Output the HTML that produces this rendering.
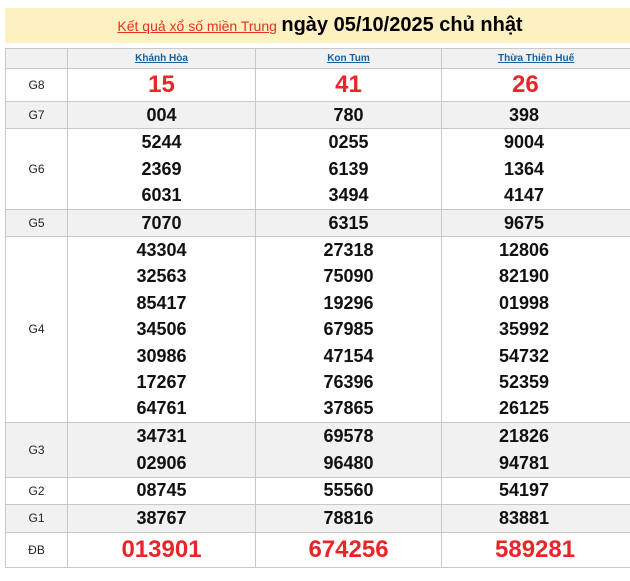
<!DOCTYPE html>
<html><head><meta charset="utf-8"><style>
body{margin:0;background:#fff;font-family:"Liberation Sans",Arial,sans-serif;width:630px;height:581px;overflow:hidden;position:relative}
.hd{position:absolute;left:5px;top:8px;width:640px;height:35px;background:#fdf1c2;text-align:center;line-height:35px;padding-right:10px;box-sizing:border-box}
.hd a{color:#e8301c;font-size:14px;text-decoration:underline}
.hd b{font-size:20px;color:#000}
table{position:absolute;left:5px;top:48px;border-collapse:collapse;table-layout:fixed;width:640px}
td{border:1px solid #c8c8c8;text-align:center;padding:0;font-weight:bold;font-size:18px;color:#111}
td.l{font-weight:normal;font-size:12px;color:#222;width:61px}
tr.g td{background:#f1f1f1}
.h td{height:19px;font-size:10px;font-weight:bold}
.h a{color:#1a5e96;text-decoration:underline}
.r{color:#e8262a;font-size:24px}
.n div{height:26.4px;line-height:26.4px}
</style></head><body>
<div class="hd"><a>Kết quả xổ số miền Trung</a> <b>ngày 05/10/2025 chủ nhật</b></div>
<table>
<colgroup><col style="width:62px"><col style="width:188px"><col style="width:186px"><col style="width:204px"></colgroup>
<tr class="g h"><td></td><td><a>Khánh Hòa</a></td><td><a>Kon Tum</a></td><td style="text-align:left;padding-left:56px"><a>Thừa Thiên Huế</a></td></tr>
<tr style="height:33px"><td class="l">G8</td><td class="r">15</td><td class="r">41</td><td class="r" style="text-align:left;padding-left:70px">26</td></tr>
<tr class="g" style="height:27px"><td class="l">G7</td><td>004</td><td>780</td><td style="text-align:left;padding-left:67px">398</td></tr>
<tr class="n" style="height:81px"><td class="l">G6</td><td><div>5244</div><div>2369</div><div>6031</div></td><td><div>0255</div><div>6139</div><div>3494</div></td><td style="text-align:left;padding-left:62px"><div>9004</div><div>1364</div><div>4147</div></td></tr>
<tr class="g" style="height:27px"><td class="l">G5</td><td>7070</td><td>6315</td><td style="text-align:left;padding-left:62px">9675</td></tr>
<tr class="n" style="height:185px"><td class="l">G4</td><td><div>43304</div><div>32563</div><div>85417</div><div>34506</div><div>30986</div><div>17267</div><div>64761</div></td><td><div>27318</div><div>75090</div><div>19296</div><div>67985</div><div>47154</div><div>76396</div><div>37865</div></td><td style="text-align:left;padding-left:57px"><div>12806</div><div>82190</div><div>01998</div><div>35992</div><div>54732</div><div>52359</div><div>26125</div></td></tr>
<tr class="g n" style="height:55px"><td class="l">G3</td><td><div>34731</div><div>02906</div></td><td><div>69578</div><div>96480</div></td><td style="text-align:left;padding-left:57px"><div>21826</div><div>94781</div></td></tr>
<tr style="height:27px"><td class="l">G2</td><td>08745</td><td>55560</td><td style="text-align:left;padding-left:57px">54197</td></tr>
<tr class="g" style="height:28px"><td class="l">G1</td><td>38767</td><td>78816</td><td style="text-align:left;padding-left:57px">83881</td></tr>
<tr style="height:35px"><td class="l">ĐB</td><td class="r">013901</td><td class="r">674256</td><td class="r" style="text-align:left;padding-left:53px">589281</td></tr>
</table>
</body></html>
